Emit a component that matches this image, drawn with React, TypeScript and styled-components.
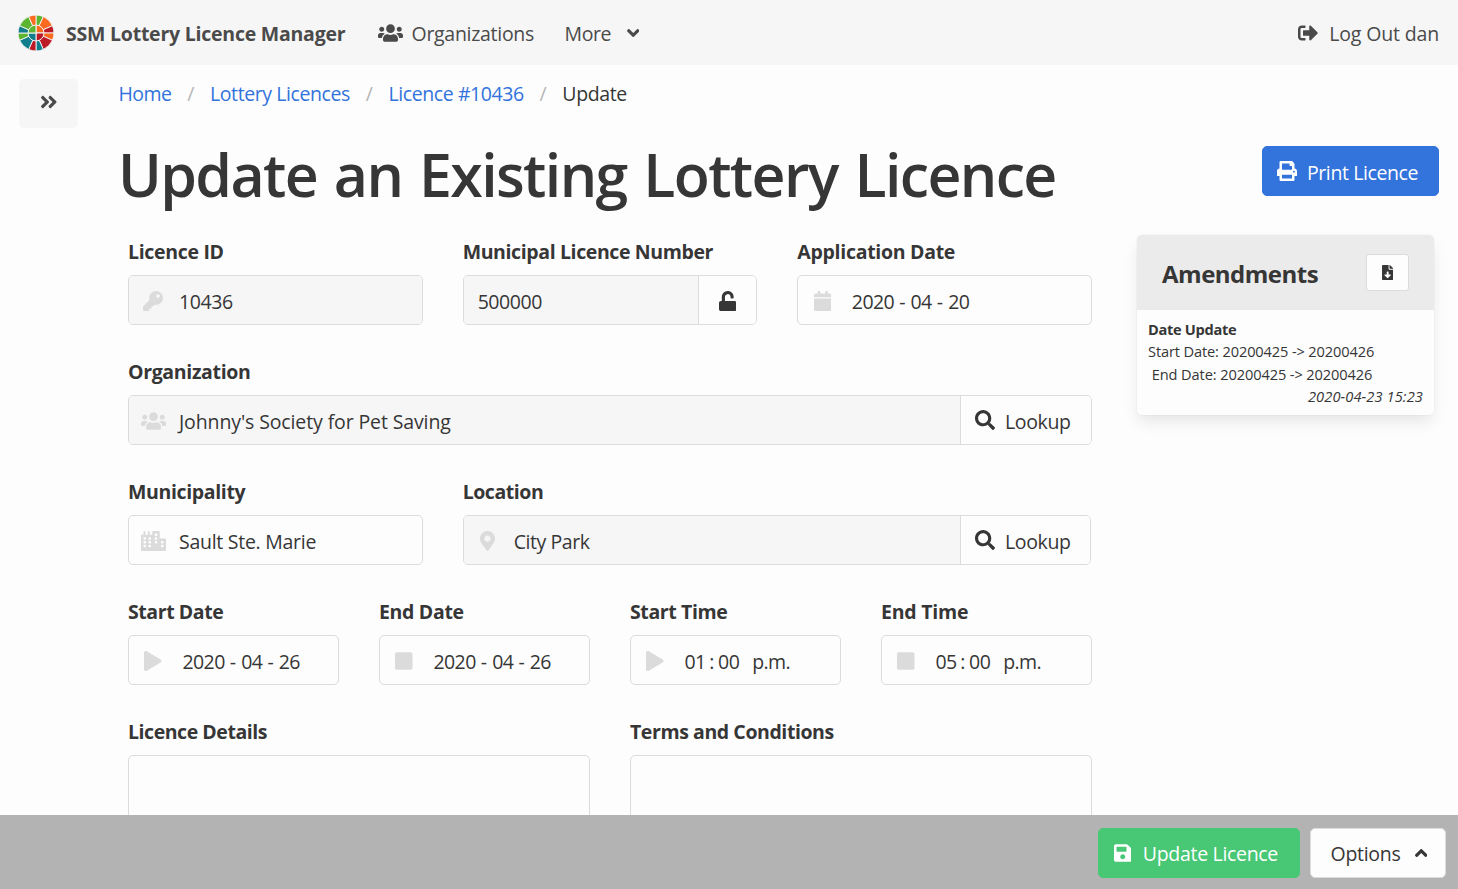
import React from 'react';
import styled, { createGlobalStyle, css } from 'styled-components';
import {
  FaAngleDoubleRight, FaAngleDown, FaAngleUp, FaCalendar, FaCity, FaFileDownload, FaKey,
  FaMapMarkerAlt, FaPlay, FaPrint, FaSave, FaSearch, FaSignOutAlt, FaStop, FaUnlock, FaUsers,
} from 'react-icons/fa';

const GlobalStyle = createGlobalStyle`
  *, *::before, *::after { box-sizing: border-box; }
  html, body { margin: 0; height: 100%; overflow: hidden; }
  body {
    background: #fdfdfd;
    color: #363636;
    font-family: "Open Sans", "Noto Sans", sans-serif;
    font-size: 19.5px;
    line-height: 30px;
  }
`;

const tracking = css<{ $track?: number }>`
  letter-spacing: ${({ $track = -0.35 }) => $track}px;
  white-space: pre;
`;

const Text = styled.span<{ $track?: number }>`
  ${tracking}
`;

const Page = styled.div`
  display: flex;
  flex-direction: column;
  height: 889px;
  overflow: hidden;
`;

/* ---- Top bar ---- */

const Navbar = styled.nav`
  display: flex;
  align-items: center;
  flex: none;
  height: 65px;
  padding: 0 19px 0 18px;
  background: #f6f6f6;
  color: #4a4a4a;
`;

const Brand = styled.a`
  display: flex;
  align-items: center;
  gap: 12px;
  width: 360px;
  font-weight: 700;
`;

const NavItem = styled.a<{ $gap: number }>`
  display: flex;
  align-items: center;
  gap: ${({ $gap }) => $gap}px;
  margin-right: 30.5px;

  &:last-child {
    margin: 0 0 0 auto;
  }
`;

const NavText = styled(Text)`
  padding-top: 3px;
`;

/* Font Awesome glyph, sized by its own aspect ratio */
const Glyph = styled.span<{ $w?: number; $h?: number }>`
  display: inline-flex;
  flex: none;

  svg {
    width: ${({ $w = 20 }) => $w}px;
    height: ${({ $h = 20 }) => $h}px;
  }
`;

/* ---- Body ---- */

const Body = styled.div`
  display: flex;
  flex: 1;
  min-height: 0;
  overflow: hidden;
`;

const Rail = styled.div`
  flex: none;
  width: 118px;
  padding: 14px 0 0 19px;
`;

const RailButton = styled.button`
  display: flex;
  align-items: center;
  justify-content: center;
  width: 59px;
  height: 49px;
  padding: 0 0 3px;
  border: 0;
  border-radius: 5px;
  background: #f6f6f6;
  color: #4a4a4a;
`;

const Main = styled.main`
  flex: 1;
  min-width: 0;
  padding: 14px 19px 0 0;
`;

const Breadcrumb = styled.ol`
  display: flex;
  margin: 0;
  padding: 0 0 0 0.5px;
  list-style: none;

  li {
    display: flex;
  }

  li + li::before {
    content: "/";
    width: 38.5px;
    text-align: center;
    color: #b5b5b5;
  }
`;

const Crumb = styled.a<{ $track: number; $current?: boolean }>`
  ${tracking}
  color: ${({ $current }) => ($current ? '#363636' : '#3273dc')};
`;

const TitleRow = styled.div`
  display: flex;
  align-items: flex-start;
  justify-content: space-between;
  height: 126px;
  padding-top: 32px;
`;

const Title = styled.h1<{ $track: number }>`
  ${tracking}
  margin: 0;
  font-size: 59px;
  font-weight: 600;
  line-height: 67px;
  word-spacing: 3px;
`;

const Button = styled.button<{ $bg?: string; $gap?: number; $pad: string }>`
  display: flex;
  align-items: center;
  gap: ${({ $gap = 11 }) => $gap}px;
  flex: none;
  height: 50px;
  padding: ${({ $pad }) => $pad};
  border: 1px solid ${({ $bg }) => $bg ?? '#dbdbdb'};
  border-radius: 5px;
  background: ${({ $bg }) => $bg ?? '#fdfdfd'};
  color: ${({ $bg }) => ($bg ? '#fff' : '#363636')};
  font: inherit;
`;

const ButtonText = styled(Text)`
  padding-top: 3px;
`;

const PrintSlot = styled.div`
  display: flex;
  padding-top: 5px;
`;

const Columns = styled.div`
  display: flex;
  align-items: flex-start;
  justify-content: space-between;
  padding: 0 5px 0 10px;
`;

/* ---- Form ---- */

const Form = styled.form`
  display: flex;
  flex-direction: column;
  gap: 32px;
  width: 964px;
  padding-top: 2px;
`;

const FieldRow = styled.div<{ $cols: string }>`
  display: grid;
  grid-template-columns: ${({ $cols }) => $cols};
  column-gap: 40px;
`;

const FieldBox = styled.div<{ $span?: number }>`
  grid-column: span ${({ $span = 1 }) => $span};
  min-width: 0;
`;

const Label = styled.label<{ $track?: number }>`
  ${tracking}
  display: block;
  height: 30px;
  margin-bottom: 8px;
  font-weight: 700;
`;

const Control = styled.div<{ $trim?: number }>`
  display: flex;
  height: 50px;
  margin-right: ${({ $trim = 0 }) => $trim}px;
  border: 1px solid #dbdbdb;
  border-radius: 5px;
  overflow: hidden;
`;

const InputArea = styled.div<{ $readOnly?: boolean; $inset?: number }>`
  display: flex;
  align-items: center;
  flex: 1;
  min-width: 0;
  padding-left: ${({ $inset = 0 }) => $inset}px;
  background: ${({ $readOnly }) => ($readOnly ? '#f6f6f6' : 'transparent')};
`;

const IconSlot = styled.span`
  display: flex;
  align-items: center;
  justify-content: center;
  width: 48px;
  margin-right: 2px;
  padding-top: 1px;
  color: #dbdbdb;
`;

const Value = styled(Text)`
  padding-top: 3px;
`;

const AddonButton = styled.button<{ $w: number; $start?: boolean }>`
  display: flex;
  align-items: center;
  justify-content: ${({ $start }) => ($start ? 'flex-start' : 'center')};
  gap: 10px;
  flex: none;
  width: ${({ $w }) => $w}px;
  padding: ${({ $start }) => ($start ? '0 0 0 14px' : '1px 1px 0 0')};
  border: 0;
  border-left: 1px solid #dbdbdb;
  background: #fdfdfd;
  color: #363636;
  font: inherit;
`;

const Segments = styled.span`
  display: flex;
  padding: 3px 0 0 3.5px;
  letter-spacing: -0.6px;
`;

const Mark = styled.span<{ $w: number }>`
  width: ${({ $w }) => $w}px;
  text-align: center;
  letter-spacing: 0;
`;

const Meridiem = styled.span`
  margin-left: 13px;
`;

const TextArea = styled.textarea`
  display: block;
  width: 100%;
  height: 160px;
  border: 1px solid #dbdbdb;
  border-radius: 5px;
  background: transparent;
  resize: none;
`;

/* ---- Amendments ---- */

const Card = styled.aside`
  width: 297px;
  border-radius: 5px;
  background: #fdfdfd;
  box-shadow: 0 8px 16px -2px rgba(10, 10, 10, 0.1), 0 0 0 1px rgba(10, 10, 10, 0.02);
`;

const CardHeader = styled.header`
  display: flex;
  align-items: center;
  justify-content: space-between;
  height: 75px;
  padding: 0 25px 0 25px;
  border-radius: 5px 5px 0 0;
  background: #ebebeb;
`;

const CardTitle = styled.h2<{ $track: number }>`
  ${tracking}
  margin: 3px 0 0;
  font-size: 24px;
  font-weight: 700;
`;

const SmallButton = styled.button`
  display: flex;
  align-items: center;
  justify-content: center;
  width: 43px;
  height: 37px;
  padding: 0;
  border: 1px solid #dbdbdb;
  border-radius: 3px;
  background: #fdfdfd;
  color: #363636;
`;

const CardBody = styled.div`
  display: flex;
  flex-direction: column;
  height: 105px;
  padding: 8px 11px 0;
  font-size: 14.6px;
  line-height: 22.4px;
`;

const CardLine = styled.div<{ $track: number; $bold?: boolean }>`
  ${tracking}
  font-weight: ${({ $bold }) => ($bold ? 700 : 400)};
`;

const Stamp = styled.em<{ $track: number }>`
  ${tracking}
  align-self: flex-end;
`;

/* ---- Bottom action bar ---- */

const ActionBar = styled.footer`
  display: flex;
  align-items: flex-start;
  justify-content: flex-end;
  gap: 10px;
  flex: none;
  height: 74px;
  padding: 13px 12px 0 0;
  background: #b3b3b3;

  ${ButtonText} {
    padding-top: 2px;
  }
`;

/* ---- Logo ---- */

const GREEN = '#5cb531';
const ORANGE = '#fb6a1e';
const RED = '#bb1a27';
const TEAL = '#0f7d8c';

const WEDGES = [
  GREEN, ORANGE, RED,
  ORANGE, RED, TEAL,
  RED, TEAL, GREEN,
  TEAL, GREEN, ORANGE,
];
const EDGES = [0, 24, 66, 90];
const HUB = [ORANGE, RED, TEAL, GREEN];

const at = (deg: number, r: number) => {
  const a = ((deg - 90) * Math.PI) / 180;
  return `${(18 + r * Math.cos(a)).toFixed(2)} ${(18 + r * Math.sin(a)).toFixed(2)}`;
};

const slice = (from: number, to: number, r: number) =>
  `M18 18L${at(from, r)}A${r} ${r} 0 0 1 ${at(to, r)}Z`;

const Logo = () => (
  <svg width="36" height="36" viewBox="0 0 36 36">
    {WEDGES.map((color, i) => {
      const base = Math.floor(i / 3) * 90;
      return (
        <path
          key={i}
          d={slice(base + EDGES[i % 3], base + EDGES[(i % 3) + 1], 18)}
          fill={color}
          stroke="#f6f6f6"
          strokeWidth="0.9"
        />
      );
    })}
    {HUB.map((color, i) => (
      <path key={i} d={slice(i * 90, i * 90 + 90, 8)} fill={color} stroke="#f6f6f6" strokeWidth="1" />
    ))}
  </svg>
);

/* ---- Composite parts ---- */

type FieldProps = {
  label: string;
  track?: number;
  span?: number;
  icon?: React.ReactNode;
  readOnly?: boolean;
  inset?: number;
  trim?: number;
  addon?: React.ReactNode;
  children: React.ReactNode;
};

const Field = ({ label, track, span, icon, readOnly, inset, trim, addon, children }: FieldProps) => (
  <FieldBox $span={span}>
    <Label $track={track}>{label}</Label>
    <Control $trim={trim}>
      <InputArea $readOnly={readOnly} $inset={inset}>
        {icon && <IconSlot>{icon}</IconSlot>}
        {children}
      </InputArea>
      {addon}
    </Control>
  </FieldBox>
);

const DateValue = ({ y, m, d }: { y: string; m: string; d: string }) => (
  <Segments>
    {y}<Mark $w={16.5}>-</Mark>{m}<Mark $w={16.5}>-</Mark>{d}
  </Segments>
);

const TimeValue = ({ h, m }: { h: string; m: string }) => (
  <Segments>
    {h}<Mark $w={12.5}>:</Mark>{m}<Meridiem>p.m.</Meridiem>
  </Segments>
);

const Lookup = ({ width }: { width: number }) => (
  <AddonButton type="button" $w={width} $start>
    <Glyph><FaSearch /></Glyph>
    <ButtonText>Lookup</ButtonText>
  </AddonButton>
);

export default function App() {
  return (
    <Page>
      <GlobalStyle />
      <Navbar>
        <Brand>
          <Logo />
          <NavText $track={-0.23}>SSM Lottery Licence Manager</NavText>
        </Brand>
        <NavItem $gap={8.5}>
          <Glyph $w={25}><FaUsers /></Glyph>
          <NavText $track={-0.29}>Organizations</NavText>
        </NavItem>
        <NavItem $gap={15.5}>
          <NavText $track={-0.41}>More</NavText>
          <Glyph $w={12.5}><FaAngleDown /></Glyph>
        </NavItem>
        <NavItem $gap={11.5}>
          <Glyph><FaSignOutAlt /></Glyph>
          <NavText $track={-0.15}>Log Out dan</NavText>
        </NavItem>
      </Navbar>

      <Body>
        <Rail>
          <RailButton type="button"><Glyph $w={17.5}><FaAngleDoubleRight /></Glyph></RailButton>
        </Rail>
        <Main>
          <Breadcrumb>
            <li><Crumb $track={-0.52}>Home</Crumb></li>
            <li><Crumb $track={-0.41}>Lottery Licences</Crumb></li>
            <li><Crumb $track={-0.41}>Licence #10436</Crumb></li>
            <li><Crumb $track={-0.37} $current>Update</Crumb></li>
          </Breadcrumb>

          <TitleRow>
            <Title $track={-1.62}>Update an Existing Lottery Licence</Title>
            <PrintSlot>
              <Button type="button" $bg="#3273dc" $gap={10} $pad="0 20px 0 14px">
                <Glyph><FaPrint /></Glyph>
                <ButtonText $track={-0.4}>Print Licence</ButtonText>
              </Button>
            </PrintSlot>
          </TitleRow>

          <Columns>
            <Form>
              <FieldRow $cols="repeat(3, 1fr)">
                <Field label="Licence ID" track={-0.32} icon={<Glyph><FaKey /></Glyph>} readOnly>
                  <Value $track={-0.4}>10436</Value>
                </Field>
                <Field
                  label="Municipal Licence Number"
                  track={-0.38}
                  readOnly
                  inset={14}
                  addon={<AddonButton type="button" $w={58}><Glyph $w={17.5}><FaUnlock /></Glyph></AddonButton>}
                >
                  <Value $track={-0.45}>500000</Value>
                </Field>
                <Field label="Application Date" track={-0.29} icon={<Glyph $w={17.5}><FaCalendar /></Glyph>}>
                  <DateValue y="2020" m="04" d="20" />
                </Field>
              </FieldRow>

              <FieldRow $cols="1fr">
                <Field
                  label="Organization"
                  track={-0.34}
                  icon={<Glyph $w={25}><FaUsers /></Glyph>}
                  readOnly
                  addon={<Lookup width={131} />}
                >
                  <Value $track={-0.12}>Johnny's Society for Pet Saving</Value>
                </Field>
              </FieldRow>

              <FieldRow $cols="repeat(3, 1fr)">
                <Field label="Municipality" track={-0.35} icon={<Glyph $w={25}><FaCity /></Glyph>}>
                  <Value $track={-0.27}>Sault Ste. Marie</Value>
                </Field>
                <Field
                  label="Location"
                  track={-0.45}
                  span={2}
                  trim={1}
                  icon={<Glyph $w={15}><FaMapMarkerAlt /></Glyph>}
                  readOnly
                  addon={<Lookup width={130} />}
                >
                  <Value $track={-0.42}>City Park</Value>
                </Field>
              </FieldRow>

              <FieldRow $cols="repeat(4, 1fr)">
                <Field label="Start Date" track={-0.42} icon={<Glyph $w={17.5}><FaPlay /></Glyph>}>
                  <DateValue y="2020" m="04" d="26" />
                </Field>
                <Field label="End Date" track={-0.33} icon={<Glyph $w={17.5}><FaStop /></Glyph>}>
                  <DateValue y="2020" m="04" d="26" />
                </Field>
                <Field label="Start Time" track={-0.38} icon={<Glyph $w={17.5}><FaPlay /></Glyph>}>
                  <TimeValue h="01" m="00" />
                </Field>
                <Field label="End Time" track={-0.22} icon={<Glyph $w={17.5}><FaStop /></Glyph>}>
                  <TimeValue h="05" m="00" />
                </Field>
              </FieldRow>

              <FieldRow $cols="repeat(2, 1fr)">
                <FieldBox>
                  <Label $track={-0.45}>Licence Details</Label>
                  <TextArea />
                </FieldBox>
                <FieldBox>
                  <Label $track={-0.42}>Terms and Conditions</Label>
                  <TextArea />
                </FieldBox>
              </FieldRow>
            </Form>

            <Card>
              <CardHeader>
                <CardTitle $track={-0.5}>Amendments</CardTitle>
                <SmallButton type="button"><Glyph $w={11.3} $h={15}><FaFileDownload /></Glyph></SmallButton>
              </CardHeader>
              <CardBody>
                <CardLine $track={-0.3} $bold>Date Update</CardLine>
                <CardLine $track={-0.125}>Start Date: 20200425 -&gt; 20200426</CardLine>
                <CardLine $track={-0.1}>{' End Date: 20200425 -> 20200426'}</CardLine>
                <Stamp $track={0.13}>2020-04-23 15:23</Stamp>
              </CardBody>
            </Card>
          </Columns>
        </Main>
      </Body>

      <ActionBar>
        <Button type="submit" $bg="#48c774" $pad="0 20.5px 0 14.5px" $gap={11.5}>
          <Glyph $w={17.5}><FaSave /></Glyph>
          <ButtonText $track={-0.31}>Update Licence</ButtonText>
        </Button>
        <Button type="button" $gap={14} $pad="0 18px 0 20px">
          <ButtonText $track={-0.28}>Options</ButtonText>
          <Glyph $w={12.5}><FaAngleUp /></Glyph>
        </Button>
      </ActionBar>
    </Page>
  );
}
